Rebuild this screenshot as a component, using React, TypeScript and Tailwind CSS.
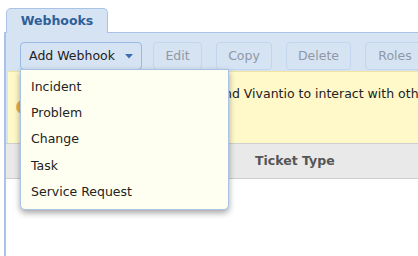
import React from "react";

const font = { fontFamily: '"DejaVu Sans", Verdana, sans-serif' };

export default function App() {
  const items = ["Incident", "Problem", "Change", "Task", "Service Request"];
  return (
    <div className="w-[418px] h-[256px] bg-white overflow-hidden relative text-[12px]" style={font}>
      <div className="pt-[7px] pl-[6px] flex">
        <div className="w-[102px] h-[25px] rounded-t-[5px] border border-b-0 border-[#a9c3e6] bg-[#d6e3f3] flex items-center justify-center font-bold text-[#2f5f98] text-[12.5px] relative top-[1px] z-10">
          Webhooks
        </div>
      </div>
      <div className="ml-[4px] border-l-2 border-t border-[#a9c3e6] bg-white h-[230px] flex flex-col">
        <div className="bg-[#d6e3f3] flex items-center gap-[10px] pl-[14px] pt-[9px] pb-[1px] h-[38px]">
          <div className="h-[28px] w-[122px] border border-[#9ab9e2] rounded-[4px] flex items-center justify-center gap-[10px] text-[#222] shrink-0 text-[12.5px]">
            <span>Add Webhook</span>
            <svg width="8" height="5" viewBox="0 0 8 5"><path d="M0 0h8L4 4.5z" fill="#3c6eb4" /></svg>
          </div>
          <div className="h-[28px] w-[49px] border border-[#c2d4ee] rounded-[4px] flex items-center justify-center text-[#8e98a6] shrink-0 ml-[1px] text-[12.5px]">Edit</div>
          <div className="h-[28px] w-[56px] border border-[#c2d4ee] rounded-[4px] flex items-center justify-center text-[#8e98a6] shrink-0 ml-[4px] text-[12.5px]">Copy</div>
          <div className="h-[28px] w-[65px] border border-[#c2d4ee] rounded-[4px] flex items-center justify-center text-[#8e98a6] shrink-0 ml-[4px] text-[12.5px]">Delete</div>
          <div className="h-[28px] w-[60px] border border-[#c2d4ee] rounded-[4px] flex items-center justify-center text-[#8e98a6] shrink-0 ml-[4px] text-[12.5px]">Roles</div>
        </div>
        <div className="bg-[#d6e3f3] pl-[2px]">
          <div className="h-[72px] bg-[#fff8c9] border-t border-[#f1e4a0] relative">
            <div className="absolute left-[8px] top-[28px] w-[14px] h-[14px] rounded-full bg-[#f0b240]" />
            <div className="flex pt-[13px] pl-[216px] text-[#222] text-[12.5px] whitespace-nowrap">
              <span>nd Vivantio to interact with other systems</span>
            </div>
          </div>
        </div>
        <div className="h-[36px] bg-[#e9e9e9] border-t border-b border-[#cfcfcf] flex items-center pl-[249px] font-bold text-[#555] text-[12.5px]">
          Ticket Type
        </div>
        <div className="flex-1 bg-white" />
      </div>
      <div className="absolute left-[20px] top-[69px] w-[209px] h-[141px] bg-[#fefff0] border border-[#a9c3e6] rounded-b-[5px] shadow-[0_3px_6px_rgba(0,0,0,0.35)] flex flex-col pt-[4px] pl-[10px] text-[#222] text-[12.5px] z-20">
        {items.map((t) => (
          <div key={t} className="h-[26.3px] flex items-center">{t}</div>
        ))}
      </div>
    </div>
  );
}
